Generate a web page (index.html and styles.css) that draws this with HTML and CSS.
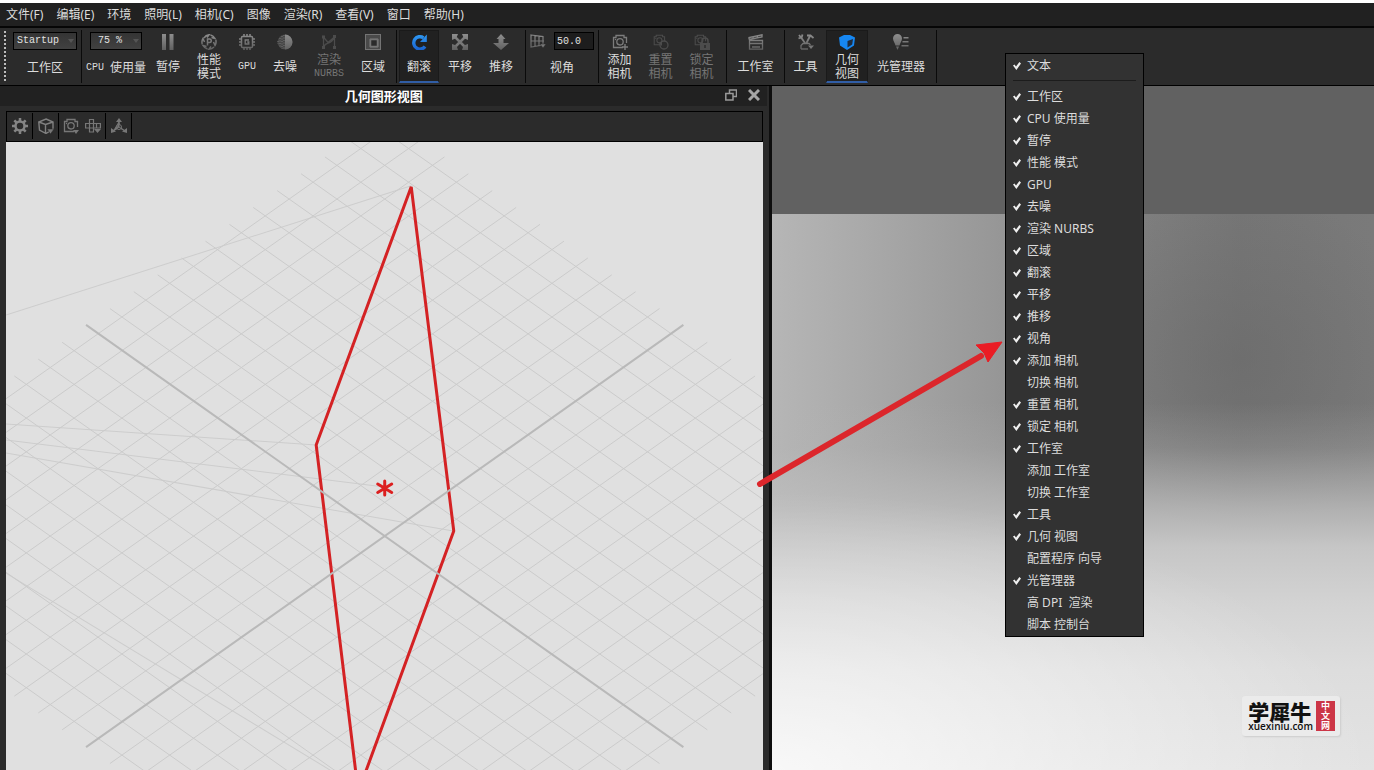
FILE: index.html
```html
<!DOCTYPE html>
<html lang="zh-CN">
<head>
<meta charset="utf-8">
<title>几何图形视图</title>
<link rel="stylesheet" href="styles.css">
</head>
<body>
<svg class="defs" width="0" height="0" aria-hidden="true">
  <defs>
    <linearGradient id="metal" x1="0" y1="0" x2="0" y2="16" gradientUnits="userSpaceOnUse"><stop offset="0" stop-color="#8e8e8e"/><stop offset="1" stop-color="#606060"/></linearGradient>
    <linearGradient id="azure" x1="0" y1="0" x2="0" y2="16" gradientUnits="userSpaceOnUse"><stop offset="0" stop-color="#2f9bf5"/><stop offset="1" stop-color="#1a63cf"/></linearGradient>
    <symbol id="camera" viewBox="0 0 16 16"><path d="M11 13.500H1.500V3.500H4V1.500H12V3.500H14.500V9" fill="none" stroke="currentColor" stroke-width="1.300"/><circle cx="8" cy="7.800" r="3.200" fill="none" stroke="currentColor" stroke-width="1.300"/><circle cx="3.500" cy="5.500" r=".7" fill="currentColor"/></symbol>
  </defs>
</svg>
<div class="app">
  <nav class="menubar">
    <a href="#">文件(F)</a><a href="#">编辑(E)</a><a href="#">环境</a><a href="#">照明(L)</a><a href="#">相机(C)</a><a href="#">图像</a><a href="#">渲染(R)</a><a href="#">查看(V)</a><a href="#">窗口</a><a href="#">帮助(H)</a>
  </nav>

  <div class="toolbar">
    <div class="grip"></div>
    <div class="group">
      <div class="field field-workspace">
        <span class="combo"><select id="workspace"><option>Startup</option></select></span>
        <label class="caption" for="workspace">工作区</label>
      </div>
    </div>
    <div class="group">
      <div class="field field-cpu">
        <span class="combo combo-cpu"><select id="cpu"><option>75 %</option></select></span>
        <label class="caption" for="cpu"><span class="ascii">CPU </span>使用量</label>
      </div>
      <button class="tool w44"><svg class="icon" viewBox="0 0 16 16" fill="url(#metal)"><path d="M2 0h4v16H2zM9.500 0h4v16h-4z"/></svg><span class="caption">暂停</span></button>
      <button class="tool w38"><svg class="icon" viewBox="0 0 16 16" fill="none" stroke="url(#metal)" stroke-width="1.500"><path d="M3 4A7 7 0 0 1 8 .8L6 3.500M9.500 1A7 7 0 0 1 14 4.500L10.500 3.500M14.800 6A7 7 0 0 1 14 11.500L12.500 8M13 13A7 7 0 0 1 8 15.200L10 12.500M6.500 15A7 7 0 0 1 2 11.500L5.500 12.500M1.200 10A7 7 0 0 1 2 4.500L3.500 8"/><path d="M6.500 11.500V5H8.500A1.600 1.600 0 0 1 8.500 8.500H6.500"/></svg><span class="caption pair"><span>性能模式</span></span></button>
      <button class="tool w38"><svg class="icon" viewBox="0 0 16 16" fill="none" stroke="url(#metal)" stroke-width="1.500"><rect x="2.500" y="2.500" width="11" height="11" rx="1"/><path d="M5 0V2M8 0V2M11 0V2M5 14V16M8 14V16M11 14V16M0 5H2M0 8H2M0 11H2M14 5H16M14 8H16M14 11H16"/><path d="M10 6H6.200V10H9.800V8H8.200" stroke-width="1.300"/></svg><span class="caption ascii">GPU</span></button>
      <button class="tool w38"><svg class="icon" viewBox="0 0 16 16"><circle cx="8" cy="8" r="7.500" fill="#464646"/><path d="M8 .5a7.500 7.500 0 0 1 0 15z" fill="url(#metal)"/><path d="M5 2V15M3 4V13M7 1V15M1 7V10" stroke="#777" stroke-dasharray="1 1.500"/></svg><span class="caption">去噪</span></button>
      <button class="tool w50" disabled><svg class="icon" viewBox="0 0 16 16" fill="none" stroke="currentColor" stroke-width="1.300"><path d="M2.500 14V3L7 8.500L13.500 3V14M2.500 13C6 6 9 13 13.500 3"/><path d="M1 1.500h3v3H1zM12 1h3v3h-3zM1 12h3v3H1zM12 12h3v3h-3z" fill="currentColor" stroke="none"/></svg><span class="caption"><span>渲染</span><span class="ascii">NURBS</span></span></button>
      <button class="tool w38"><svg class="icon" viewBox="0 0 16 16" fill="none" stroke="#747474"><rect width="16" height="16" fill="#4a4a4a" stroke="none"/><rect x=".5" y=".5" width="15" height="15"/><path d="M5 5h8v8H5z" fill="#2b2b2b"/><rect x="5.500" y="5.500" width="7" height="7" stroke-width="1.500"/></svg><span class="caption">区域</span></button>
    </div>
    <div class="group group-nav">
      <button class="tool active w40"><svg class="icon" viewBox="0 0 16 16"><path d="M14 12.500A6.200 6.200 0 1 1 12.500 3.800" fill="none" stroke="url(#azure)" stroke-width="3.400"/><path d="M15.800 .5V8H9z" fill="url(#azure)"/></svg><span class="caption">翻滚</span></button>
      <button class="tool w42"><svg class="icon" viewBox="0 0 16 16"><path d="M2.500 2.500L13.500 13.500M13.500 2.500L2.500 13.500" stroke="#777" stroke-width="2.500"/><path d="M0 0H6L4.500 3.500L6.500 5.500L5.500 6.500L3.500 4.500L0 6zM16 0V6L12.500 4.500L10.500 6.500L9.500 5.500L11.500 3.500L10 0zM0 16V10L4.500 11.500L6 16zM16 16H10L11.500 11.500L16 10z" fill="url(#metal)"/></svg><span class="caption">平移</span></button>
      <button class="tool w40"><svg class="icon" viewBox="0 0 16 16" fill="url(#metal)"><path d="M8 0L12.500 5H10.500V9H16L8 16L0 9H5.500V5H3.500z"/></svg><span class="caption">推移</span></button>
    </div>
    <div class="group">
      <div class="field">
        <div class="field-row">
          <svg class="icon" viewBox="0 0 16 16" fill="none" stroke="url(#metal)" stroke-width="1.200"><path d="M1 2L13 3.500V12L1 14zM5 2.500V13.500M9 3V12.500M1 8H14"/><path d="M10 11h6l-3 4z" fill="#777" stroke="#2b2b2b" stroke-width=".5"/></svg>
          <input class="angle" id="angle" type="text" value="50.0">
        </div>
        <label class="caption" for="angle">视角</label>
      </div>
    </div>
    <div class="group group-flush">
      <button class="tool w41"><svg class="icon" viewBox="0 0 16 16" color="#7c7c7c"><use href="#camera"/><path d="M13 10V16M10 13H16" stroke="currentColor" stroke-width="1.400"/></svg><span class="caption pair"><span>添加相机</span></span></button>
      <button class="tool w41" disabled><svg class="icon" viewBox="0 0 16 16"><g transform="scale(.8)"><use href="#camera" width="16" height="16"/></g><circle cx="11" cy="11" r="4" fill="#2b2b2b" stroke="currentColor" stroke-width="1.300"/><path d="M6 9L9 7V12z" fill="currentColor"/></svg><span class="caption pair"><span>重置相机</span></span></button>
      <button class="tool w41" disabled><svg class="icon" viewBox="0 0 16 16"><g transform="scale(.8)"><use href="#camera" width="16" height="16"/></g><path d="M6 9H16V16H6z" fill="currentColor"/><path d="M8 9V7a3 3 0 0 1 6 0V9" fill="none" stroke="currentColor" stroke-width="1.500"/><path d="M11 11V14" stroke="#2b2b2b" stroke-width="1.500"/></svg><span class="caption pair"><span>锁定相机</span></span></button>
    </div>
    <div class="group group-studio">
      <button class="tool w53"><svg class="icon" viewBox="0 0 16 16" fill="none" stroke="url(#metal)" stroke-width="1.300"><path d="M1.500 6.500H14.500V15.200H1.500zM1.500 9.500H14.500M4 13H12M1 5.500V3.500L14 .8V3L1 5.500M5 3L6 5M9 2L10 4"/></svg><span class="caption">工作室</span></button>
    </div>
    <div class="group group-last">
      <button class="tool w41"><svg class="icon" viewBox="0 0 16 16" fill="none" stroke="url(#metal)" stroke-width="1.800"><path d="M1 1L3 3.500L.5 4.500M4.500 .5L3.500 4L7 9M8.500 9L12 2M9 1.500H12.500L15.500 4"/><path d="M3 15V11.500L5 9.500H11L12.500 11M3 15H10" stroke-width="1.300"/><path d="M10 11.500H16L13 15z" fill="#777" stroke="none"/></svg><span class="caption">工具</span></button>
      <button class="tool active w42"><svg class="icon" viewBox="0 0 16 16"><path d="M0 3.500L5 1H11L16 3.500L15 11.500L8 16L1 11.500z" fill="#1687f2"/><path d="M8.500 7L14 5L13.200 10.500L8.500 13.500z" fill="#1f2d40"/></svg><span class="caption pair"><span>几何视图</span></span></button>
      <button class="tool w66"><svg class="icon" viewBox="0 0 16 16" fill="url(#metal)"><path d="M4.500 0a4.500 4.500 0 0 1 4.500 4.500C9 7 7 9 6.500 11.500h-4C2 9 0 7 0 4.500A4.500 4.500 0 0 1 4.500 0zM3 12.500h3l-1.500 3.500zM8.500 11h7v1.500h-7zM9.500 7h6v1.500h-6zM10.500 3h5v1.500h-5z"/></svg><span class="caption">光管理器</span></button>
    </div>
  </div>

  <main class="workarea">
    <section class="panel">
      <header class="panel-title">
        <h1>几何图形视图</h1>
        <div class="panel-buttons">
          <button aria-label="浮动"><svg viewBox="0 0 12 12" fill="none" stroke="#999" stroke-width="1.500"><path d="M4.500 4V1H11.500V7.500H8.500M.8 4.500H8V11H.8z"/></svg></button>
          <button aria-label="关闭"><svg viewBox="0 0 12 12" fill="none" stroke="#a5a5a5" stroke-width="3"><path d="M1 1L11 11M11 1L1 11"/></svg></button>
        </div>
      </header>
      <div class="panel-body">
        <div class="viewbar">
          <button class="w26" aria-label="设置"><svg class="icon" viewBox="0 0 16 16" fill="none" stroke="#858585"><circle cx="8" cy="8" r="4.500" stroke-width="2.500"/><path d="M8 0V3M8 13V16M0 8H3M13 8H16M2.300 2.300L4.500 4.500M11.500 11.500L13.700 13.700M13.700 2.300L11.500 4.500M4.500 11.500L2.300 13.700" stroke-width="2.500"/></svg></button>
          <button class="w26" aria-label="模型"><svg class="icon" viewBox="0 0 16 16" fill="none" stroke="#808080" stroke-width="1.400"><path d="M8 1L15 4V11L8 15.500L1.500 12L.8 4zM.8 4L7.500 6.500L15 4M7.500 6.500V15"/><path d="M9 11h7l-3.500 5z" fill="#777" stroke="#2b2b2b" stroke-width=".5"/></svg></button>
          <div class="w47">
            <button aria-label="相机"><svg class="icon" viewBox="0 0 16 16" color="#777"><use href="#camera"/><path d="M10 12h6l-3 4z" fill="#777"/></svg></button>
            <button aria-label="对齐"><svg class="icon" viewBox="0 0 16 16" fill="none" stroke="#777" stroke-width="1.200"><path d="M.6 5.500H15.400V10H.6zM4.500 1.500H8.500V14H4.500zM11.500 5.500V10"/><path d="M9 11h7l-3.500 4z" fill="#777" stroke="none"/></svg></button>
          </div>
          <button class="w26" aria-label="坐标轴"><svg class="icon" viewBox="0 0 16 16" fill="#777" stroke="#777"><path d="M8 0L11 4H5zM0 10L5 13.500L0 15zM16 10L11 13.500L16 15z" stroke="none"/><path d="M8 3V9L2 13M8 9L14 13" stroke-width="1.500"/><circle cx="8" cy="9" r="2.500" fill="#2b2b2b"/><path d="M8 5V9L5 11M8 9L11 11"/></svg></button>
        </div>
        <svg class="scene" viewBox="0 0 757 628" preserveAspectRatio="xMidYMid slice">
          <g fill="none" stroke="#cdcdcd" stroke-width="1">
            <path d="M0 173L405 44M0 282L310 303M0 298L378 345M0 311L447 389M0 431L352 645"/>
            <g transform="matrix(23.88 -16.84 23.88 16.84 378.5 394)" stroke="#cbcbcb">
              <path vector-effect="non-scaling-stroke" d="M-12-12.500V12.500M-11-12.500V12.500M-10-12.500V12.500M-9-12.500V12.500M-8-12.500V12.500M-7-12.500V12.500M-6-12.500V12.500M-5-12.500V12.500M-4-12.500V12.500M-3-12.500V12.500M-2-12.500V12.500M-1-12.500V12.500M1-12.500V12.500M2-12.500V12.500M3-12.500V12.500M4-12.500V12.500M5-12.500V12.500M6-12.500V12.500M7-12.500V12.500M8-12.500V12.500M9-12.500V12.500M10-12.500V12.500M11-12.500V12.500M12-12.500V12.500"/>
              <path vector-effect="non-scaling-stroke" d="M-12.500-12H12.500M-12.500-11H12.500M-12.500-10H12.500M-12.500-9H12.500M-12.500-8H12.500M-12.500-7H12.500M-12.500-6H12.500M-12.500-5H12.500M-12.500-4H12.500M-12.500-3H12.500M-12.500-2H12.500M-12.500-1H12.500M-12.500 1H12.500M-12.500 2H12.500M-12.500 3H12.500M-12.500 4H12.500M-12.500 5H12.500M-12.500 6H12.500M-12.500 7H12.500M-12.500 8H12.500M-12.500 9H12.500M-12.500 10H12.500M-12.500 11H12.500M-12.500 12H12.500"/>
            </g>
          </g>
          <path d="M405 45L310 303L352 650L447.500 389z" fill="none" stroke="#d42224" stroke-width="3" stroke-linejoin="bevel"/>
          <path d="M80 183L677 605M677 183L80 605" stroke="#b9b9b9" stroke-width="2"/>
          <path d="M378.500 339V353M371.500 342L385.500 350.500M385.500 342L371.500 350.500" stroke="#dc1f1f" stroke-width="3" stroke-linecap="round"/>
        </svg>
      </div>
    </section>
    <section class="render">
      <div class="render-image"></div>
    </section>
  </main>

  <div class="context-menu">
    <label><input type="checkbox" checked>文本</label>
    <hr>
    <label><input type="checkbox" checked>工作区</label>
    <label><input type="checkbox" checked>CPU 使用量</label>
    <label><input type="checkbox" checked>暂停</label>
    <label><input type="checkbox" checked>性能 模式</label>
    <label><input type="checkbox" checked>GPU</label>
    <label><input type="checkbox" checked>去噪</label>
    <label><input type="checkbox" checked>渲染 NURBS</label>
    <label><input type="checkbox" checked>区域</label>
    <label><input type="checkbox" checked>翻滚</label>
    <label><input type="checkbox" checked>平移</label>
    <label><input type="checkbox" checked>推移</label>
    <label><input type="checkbox" checked>视角</label>
    <label><input type="checkbox" checked>添加 相机</label>
    <label><input type="checkbox">切换 相机</label>
    <label><input type="checkbox" checked>重置 相机</label>
    <label><input type="checkbox" checked>锁定 相机</label>
    <label><input type="checkbox" checked>工作室</label>
    <label><input type="checkbox">添加 工作室</label>
    <label><input type="checkbox">切换 工作室</label>
    <label><input type="checkbox" checked>工具</label>
    <label><input type="checkbox" checked>几何 视图</label>
    <label><input type="checkbox">配置程序 向导</label>
    <label><input type="checkbox" checked>光管理器</label>
    <label><input type="checkbox">高 DPI&nbsp; 渲染</label>
    <label><input type="checkbox">脚本 控制台</label>
  </div>

  <svg class="pointer" viewBox="0 0 250 152" aria-hidden="true"><path d="M5 149L226 21" stroke="#dc262b" stroke-width="6" stroke-linecap="round"/><path d="M247 7L233 27L229 18L221 10z" fill="#ea1c24" stroke="#ea1c24"/></svg>

  <div class="watermark">
    <div class="brand"><span class="brand-name">学犀牛</span><span class="brand-url">xuexiniu.com</span></div>
    <div class="seal">中文网</div>
  </div>
</div>
</body>
</html>
```

FILE: styles.css
```css
* { box-sizing: border-box; }

body {
  margin: 0;
  font: 12px/16px "Noto Sans", "Noto Sans CJK SC", sans-serif;
  color: #dcdcdc;
  background: #2b2b2b;
}

button {
  margin: 0;
  padding: 0;
  border: 0;
  background: none;
  color: inherit;
  font: inherit;
}

.defs { position: absolute; }
.icon { display: block; flex: none; width: 16px; height: 16px; }

.app {
  position: relative;
  display: flex;
  flex-direction: column;
  height: 100vh;
  overflow: hidden;
  border-top: 3px solid #fff;
}

/* Menu bar */
.menubar {
  display: flex;
  align-items: center;
  gap: 13px;
  flex: none;
  height: 25px;
  padding: 0 6px;
  background: #212121;
  border-bottom: 2px solid #060606;
}
.menubar a { color: #dcdcdc; text-decoration: none; white-space: nowrap; }

/* Main toolbar */
.toolbar {
  display: flex;
  flex: none;
  height: 58px;
  padding: 2px 0;
  border-bottom: 1px solid #000;
  background: #2b2b2b;
}
.grip {
  width: 2px;
  margin: 1px 3px 1px 4px;
  background: repeating-linear-gradient(#bdbdbd 0 2px, transparent 2px 4px);
}
.group { display: flex; padding: 0 4px; border-right: 1px solid #0a0a0a; }
.group-nav { padding-left: 2px; }
.group-flush { padding-left: 0; }
.group-studio { padding: 0 2px; }
.group-last { padding: 0 2px 0 0; }

.tool, .field {
  display: flex;
  flex-direction: column;
  align-items: center;
}
.tool { padding: 4px 0 2px; }
.tool.active {
  padding: 3px 0 0;
  background: #212121;
  border: 1px solid #1a1a1a;
  border-bottom: 2px solid #315ea6;
}
.tool:disabled { color: #757575; }
.tool:disabled .icon { color: #4c4c4c; }

.caption {
  display: flex;
  flex: 1;
  align-items: center;
  padding-top: 2px;
  line-height: 14px;
  white-space: pre;
}
.tool .caption { flex-direction: column; justify-content: center; }
.tool .pair { width: 25px; white-space: normal; }
.ascii { font-family: "Liberation Mono", monospace; font-size: 10px; }

.w26 { width: 26px; }
.w38 { width: 38px; }
.w40 { width: 40px; }
.w41 { width: 41px; }
.w42 { width: 42px; }
.w44 { width: 44px; }
.w47 { width: 47px; }
.w50 { width: 50px; }
.w53 { width: 53px; }
.w66 { width: 66px; }

.field { padding: 2px 0 0; }
.field-workspace { width: 64px; }
.field-cpu { width: 60px; }
.field-row { display: flex; gap: 8px; align-items: center; }
.combo { position: relative; display: flex; width: 64px; }
.combo-cpu { width: 52px; }
.combo::after {
  content: "";
  position: absolute;
  right: 3px;
  top: 7px;
  border: 3px solid transparent;
  border-top: 4px solid #555;
}
select, .angle {
  appearance: none;
  width: 100%;
  height: 18px;
  margin: 0;
  padding: 0 3px;
  border: 1px solid #000;
  border-radius: 0;
  background: linear-gradient(#343434, #414141);
  color: #e2e2e2;
  font: 10px/16px "Liberation Mono", monospace;
}
.combo-cpu select { padding-left: 7px; }
.angle { width: 40px; padding: 0 2px; background: #1d1d1d; }

/* Work area */
.workarea { display: grid; grid-template-columns: 56fr 44fr; flex: 1; min-height: 0; }
.panel { display: flex; flex-direction: column; min-width: 0; min-height: 0; }
.panel-title {
  position: relative;
  display: flex;
  justify-content: center;
  align-items: center;
  flex: none;
  height: 20px;
  margin-right: 2px;
  background: #212121;
}
.panel-title h1 { margin: 0; color: #fff; font-size: 13px; line-height: 20px; }
.panel-buttons { position: absolute; right: 7px; top: 3px; display: flex; gap: 11px; }
.panel-buttons svg { display: block; width: 12px; height: 12px; }
.panel-body { display: flex; flex-direction: column; flex: 1; min-height: 0; padding: 5px 6px 0; }
.viewbar { display: flex; flex: none; height: 31px; border: 1px solid #000; }
.viewbar > * {
  display: flex;
  align-items: center;
  justify-content: center;
  gap: 6px;
  margin: 1px 0 2px;
  border-right: 1px solid #000;
}
.scene { display: block; flex: 1; width: 100%; min-height: 0; background: #e0e0e0; }

.render { display: flex; flex-direction: column; min-width: 0; border-left: 3px solid #0e0e0e; background: #616161; }
.render-image {
  flex: 1;
  margin-top: 128px;
  background:
    radial-gradient(ellipse 100% 50% at 0 100%, rgba(255,255,255,.75), rgba(255,255,255,0)),
    linear-gradient(180deg, rgba(180,180,180,0) 34%, rgba(180,180,180,.25) 42%, rgba(190,190,190,.8) 53%, #c6c6c6 60%, #d3d3d3 70%, #dddddd 82%, #e3e3e3 100%),
    radial-gradient(ellipse 30% 30% at 78% 26%, rgba(105,105,105,.6), rgba(105,105,105,0)),
    linear-gradient(90deg, #b6b6b6, #989898 36%, #7e7e7e 62%, #767676 78%, #7a7a7a);
}

/* Toolbar context menu */
.context-menu {
  position: absolute;
  left: 1005px;
  top: 50px;
  width: 139px;
  padding: 1px 7px 0;
  border: 1px solid #000;
  background: #323232;
}
.context-menu label { display: flex; align-items: center; gap: 7px; height: 22px; white-space: nowrap; }
.context-menu hr { margin: 3px 0 5px; border: 0; border-top: 1px solid #1c1c1c; }
.context-menu input { appearance: none; flex: none; width: 8px; height: 8px; margin: 0 -1px 0 0; }
.context-menu input:checked { background: #eee; clip-path: polygon(0 45%, 18% 30%, 38% 55%, 80% 0, 100% 18%, 42% 100%); }

.pointer { position: absolute; left: 755px; top: 332px; width: 250px; height: 152px; }

.watermark {
  position: absolute;
  right: 34px;
  bottom: 34px;
  display: flex;
  gap: 3px;
  padding: 5px 5px 5px 6px;
  border-radius: 3px;
  background: #ebebeb;
  box-shadow: 1px 1px 2px #ccc;
  color: #111;
}
.brand { display: flex; flex-direction: column; }
.brand-name { font: 900 21px/20px "Noto Sans CJK SC", sans-serif; }
.brand-url { font-family: "Open Sans", sans-serif; font-size: 10px; font-weight: 600; line-height: 10px; }
.seal { width: 19px; padding: 0 5px; background: #cc3647; color: #fff; font: bold 9px/10px "Noto Sans CJK SC", sans-serif; }
```
